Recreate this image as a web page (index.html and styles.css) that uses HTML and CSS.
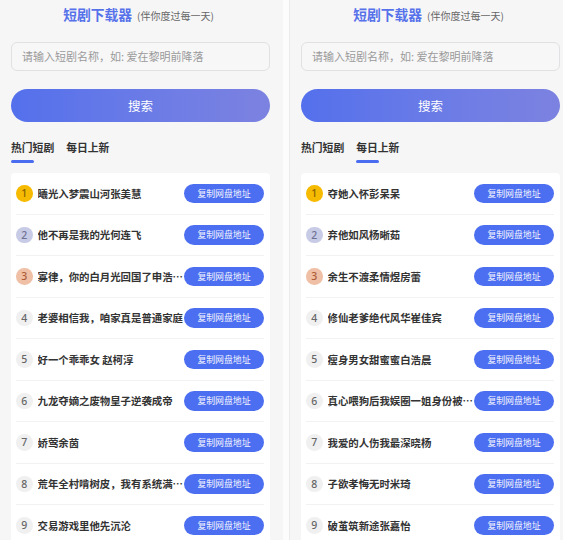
FILE: index.html
```html
<!DOCTYPE html>
<html lang="zh-CN">
<head>
<meta charset="utf-8">
<title>短剧下载器</title>
<link rel="stylesheet" href="styles.css">
</head>
<body>
<div class="screen">
  <section class="panel panel-left">
    <header class="header">
      <span class="title">短剧下载器</span>
      <span class="subtitle">(伴你度过每一天)</span>
    </header>
    <div class="search-box">请输入短剧名称，如: 爱在黎明前降落</div>
    <div class="search-btn">搜索</div>
    <nav class="tabs">
      <div class="tab active">热门短剧<span class="bar"></span></div>
      <div class="tab">每日上新<span class="bar"></span></div>
    </nav>
    <ul class="list">
      <li class="row"><span class="rank r1">1</span><span class="name">曦光入梦震山河张美慧</span><span class="copy">复制网盘地址</span></li>
      <li class="row"><span class="rank r2">2</span><span class="name">他不再是我的光何连飞</span><span class="copy">复制网盘地址</span></li>
      <li class="row"><span class="rank r3">3</span><span class="name">寡律，你的白月光回国了申浩宇欧阳</span><span class="copy">复制网盘地址</span></li>
      <li class="row"><span class="rank">4</span><span class="name">老婆相信我，咱家真是普通家庭</span><span class="copy">复制网盘地址</span></li>
      <li class="row"><span class="rank">5</span><span class="name">好一个乖乖女 赵柯淳</span><span class="copy">复制网盘地址</span></li>
      <li class="row"><span class="rank">6</span><span class="name">九龙夺嫡之废物皇子逆袭成帝</span><span class="copy">复制网盘地址</span></li>
      <li class="row"><span class="rank">7</span><span class="name">娇莺余茵</span><span class="copy">复制网盘地址</span></li>
      <li class="row"><span class="rank">8</span><span class="name">荒年全村啃树皮，我有系统满仓粮</span><span class="copy">复制网盘地址</span></li>
      <li class="row"><span class="rank">9</span><span class="name">交易游戏里他先沉沦</span><span class="copy">复制网盘地址</span></li>
    </ul>
  </section>
  <div class="divider"></div>
  <section class="panel panel-right">
    <header class="header">
      <span class="title">短剧下载器</span>
      <span class="subtitle">(伴你度过每一天)</span>
    </header>
    <div class="search-box">请输入短剧名称，如: 爱在黎明前降落</div>
    <div class="search-btn">搜索</div>
    <nav class="tabs">
      <div class="tab">热门短剧<span class="bar"></span></div>
      <div class="tab active">每日上新<span class="bar"></span></div>
    </nav>
    <ul class="list">
      <li class="row"><span class="rank r1">1</span><span class="name">夺她入怀彭呆呆</span><span class="copy">复制网盘地址</span></li>
      <li class="row"><span class="rank r2">2</span><span class="name">弃他如风杨晰茹</span><span class="copy">复制网盘地址</span></li>
      <li class="row"><span class="rank r3">3</span><span class="name">余生不渡柔情煜房蕾</span><span class="copy">复制网盘地址</span></li>
      <li class="row"><span class="rank">4</span><span class="name">修仙老爹绝代风华崔佳宾</span><span class="copy">复制网盘地址</span></li>
      <li class="row"><span class="rank">5</span><span class="name">瘦身男女甜蜜蜜白浩晨</span><span class="copy">复制网盘地址</span></li>
      <li class="row"><span class="rank">6</span><span class="name">真心喂狗后我娱圈一姐身份被曝光</span><span class="copy">复制网盘地址</span></li>
      <li class="row"><span class="rank">7</span><span class="name">我爱的人伤我最深晓杨</span><span class="copy">复制网盘地址</span></li>
      <li class="row"><span class="rank">8</span><span class="name">子欲孝悔无时米琦</span><span class="copy">复制网盘地址</span></li>
      <li class="row"><span class="rank">9</span><span class="name">破茧筑新途张嘉怡</span><span class="copy">复制网盘地址</span></li>
    </ul>
  </section>
</div>
</body>
</html>
```
FILE: styles.css
```css
html, body {
  margin: 0;
  padding: 0;
  background: #f6f6f7;
  overflow: hidden;
}
body {
  font-family: "Noto Sans CJK SC", "Noto Sans", sans-serif;
  color: #333;
}
.screen {
  display: flex;
  width: 563px;
  height: 540px;
  overflow: hidden;
}
.panel {
  flex: 0 0 auto;
  box-sizing: border-box;
  width: 283px;
  padding: 4px 13px 0 11px;
  background: #f6f6f7;
}
.panel-right {
  width: 281px;
  padding-right: 11px;
}
.divider {
  flex: 0 0 6px;
  background: #fcfcfc;
  border-right: 1px solid #ebebeb;
}
.header {
  display: flex;
  justify-content: center;
  align-items: baseline;
  gap: 5px;
  height: 20px;
  line-height: 20px;
  padding-right: 4px;
}
.title {
  font-size: 13.8px;
  font-weight: bold;
  color: #5672ea;
}
.subtitle {
  font-size: 10px;
  color: #666;
}
.search-box {
  margin-top: 18px;
  box-sizing: border-box;
  height: 29px;
  border: 1px solid #e1e1e3;
  border-radius: 6px;
  background: #f7f7f8;
  padding-left: 10px;
  font-size: 11px;
  line-height: 27px;
  color: #9a9a9a;
}
.search-btn {
  margin-top: 18px;
  height: 33px;
  border-radius: 17px;
  background: linear-gradient(90deg, #5470ec 0%, #6c7ce6 55%, #7c82e0 100%);
  color: #fff;
  font-size: 12.5px;
  line-height: 33px;
  text-align: center;
}
.tabs {
  display: flex;
  gap: 12px;
  margin-top: 17px;
}
.tab {
  display: flex;
  flex-direction: column;
  font-size: 10.8px;
  font-weight: bold;
  line-height: 16px;
  color: #333;
}
.tab .bar {
  display: block;
  width: 23px;
  height: 3px;
  margin-top: 5px;
  border-radius: 2px;
  background: transparent;
}
.tab.active .bar {
  background: #4a6cf0;
}
.list {
  list-style: none;
  margin: 10px 0 0;
  padding: 0 6px 0 5px;
  background: #fff;
  border-radius: 4px;
}
.row {
  display: flex;
  align-items: center;
  box-sizing: border-box;
  height: 41.5px;
  border-bottom: 1px solid #f2f2f3;
}
.rank {
  flex: 0 0 auto;
  width: 16.5px;
  height: 16.5px;
  border-radius: 50%;
  background: #f0f0f1;
  color: #666;
  font-size: 10.5px;
  font-weight: 500;
  line-height: 16.5px;
  text-align: center;
  font-family: "Noto Sans", "Liberation Sans", sans-serif;
}
.rank.r1 { background: #f6bb00; color: #8a6200; }
.rank.r2 { background: #c8cbe6; color: #6e7393; }
.rank.r3 { background: #efc0a6; color: #ad5b36; }
.name {
  flex: 1 1 auto;
  min-width: 0;
  margin-left: 5px;
  font-size: 10.4px;
  font-weight: bold;
  color: #333;
  white-space: nowrap;
  overflow: hidden;
  text-overflow: ellipsis;
}
.copy {
  flex: 0 0 auto;
  width: 80px;
  height: 19.5px;
  margin-left: 1px;
  border-radius: 10px;
  background: #4c6ef0;
  color: #f4f6ff;
  font-size: 8.9px;
  line-height: 19.5px;
  text-align: center;
}
```
